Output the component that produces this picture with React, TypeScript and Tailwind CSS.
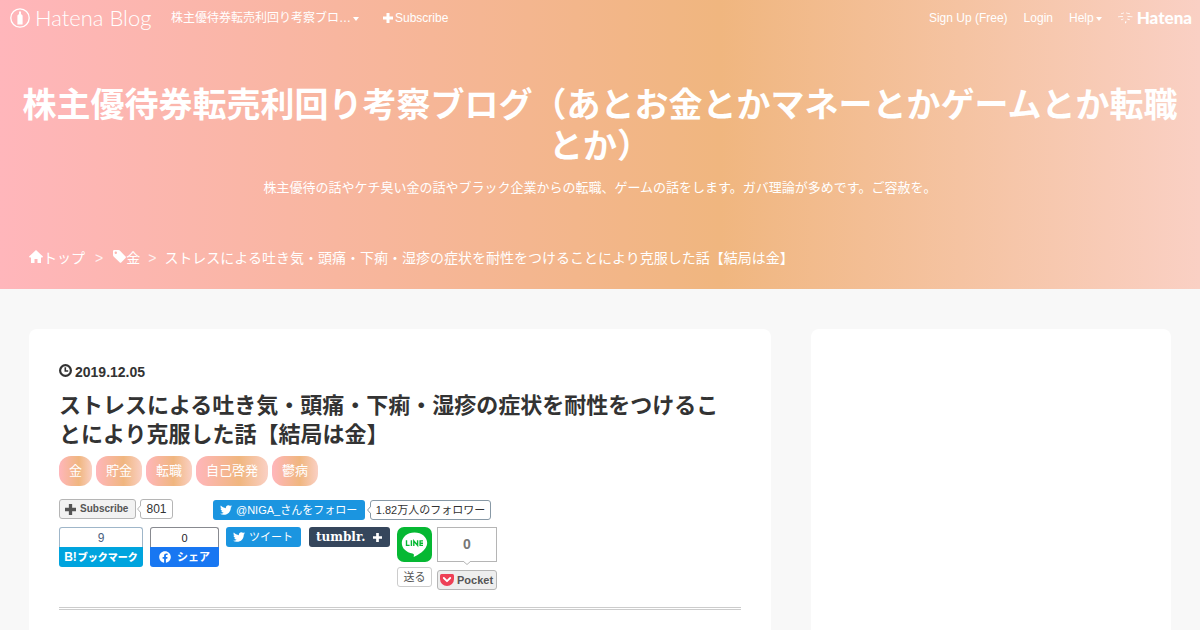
import React from "react"
import { FaTwitter, FaFacebook } from "react-icons/fa"

const headerGradient = "bg-[linear-gradient(90deg,#ffb6bb_0%,#f0b67f_60%,#fad0c4_100%)]"

const tags = ["金", "貯金", "転職", "自己啓発", "鬱病"]

const HomeIcon = () => (
    <svg viewBox="0 0 14 13" className="mb-1 h-[13px] w-[14px] fill-current" aria-hidden="true">
        <path d="M7 0 L14 6.6 L13.4 7.4 H12 V13 H8.5 V9 H5.5 V13 H2 V7.4 H.6 L0 6.6 Z" />
    </svg>
)

const TagIcon = () => (
    <svg viewBox="0 0 13 13" className="mb-1 h-[13px] w-[13px] fill-current" aria-hidden="true">
        <path fillRule="evenodd" d="M0 1.2 Q0 0 1.2 0 H5.4 Q6.2 0 6.8 .6 L12.6 6.6 Q13.2 7.3 12.6 8 L8.2 12.5 Q7.5 13.1 6.8 12.5 L.6 6.4 Q0 5.8 0 5 Z M2.8 1.6 A1.2 1.2 0 1 0 2.8 4 A1.2 1.2 0 1 0 2.8 1.6 Z" />
    </svg>
)

const ClockIcon = () => (
    <svg viewBox="0 0 13 13" className="mb-1 h-[13px] w-[13px]" fill="none" stroke="currentColor" strokeWidth="2.2" aria-hidden="true">
        <circle cx="6.5" cy="6.5" r="5.4" />
        <path d="M6.3 3.2 V7 H9.2" strokeWidth="1.6" />
    </svg>
)

const PlusIcon = ({ className }: { className: string }) => (
    <svg viewBox="0 0 10 10" className={className} fill="currentColor" aria-hidden="true">
        <path d="M3.5 0 H6.5 V3.5 H10 V6.5 H6.5 V10 H3.5 V6.5 H0 V3.5 H3.5 Z" />
    </svg>
)

const Caret = () => (
    <svg viewBox="0 0 6 4" className="mt-px h-1 w-[6px] fill-current" aria-hidden="true">
        <path d="M0 0 H6 L3 4 Z" />
    </svg>
)

// the little arrow on the left side of a counter
const BubbleArrow = ({ color }: { color: string }) => (
    <svg viewBox="0 0 4 8" className="absolute top-[5px] -left-[4px] h-2 w-1" aria-hidden="true">
        <path d="M4 0 L.6 4 L4 8" fill="#fff" stroke={color} />
    </svg>
)

const GlobalNav = () => (
    <nav className="flex h-9 items-center justify-between pr-2 pl-[10px] text-xs text-white">
        <div className="flex items-center">
            <a href="#" className="flex w-[141px] items-center gap-[5px] whitespace-nowrap" aria-label="Hatena Blog">
                <svg viewBox="0 0 20 20" className="h-5 w-5 shrink-0" aria-hidden="true">
                    <circle cx="10" cy="10" r="9.2" fill="none" stroke="#fff" strokeWidth="1.3" />
                    <path d="M9 3.5 H11 V6 L12.6 7.6 V16.5 H7.4 V7.6 L9 6 Z" fill="#fff" />
                </svg>
                <span className="font-[Lato] text-[22px] leading-6 font-light">Hatena Blog</span>
            </a>
            <a href="#" className="ml-5 flex items-center gap-[2px]">株主優待券転売利回り考察ブロ…<Caret /></a>
            <a href="#" className="ml-6 flex items-center gap-[2px]"><PlusIcon className="h-[10px] w-[10px]" />Subscribe</a>
        </div>
        <div className="flex items-center gap-4">
            <a href="#">Sign Up (Free)</a>
            <a href="#">Login</a>
            <a href="#" className="flex items-center gap-[2px]">Help<Caret /></a>
            <a href="#" className="flex items-center gap-1" aria-label="Hatena">
                <svg viewBox="0 0 15 12" className="h-3 w-[15px] fill-white" aria-hidden="true">
                    <path d="M3 1.5 L6 .5 V1.2 L3 2.2 Z M8 .5 L12 1.5 V2.2 L8 1.2 Z M0 4.6 L5 4 V4.7 L0 5.3 Z M9.5 4 L14.5 4.6 V5.3 L9.5 4.7 Z M3 7.6 L5.5 6.5 V7.3 L3 8.3 Z M9.5 6.5 L12 7.6 L11.4 8.2 L9 7.3 Z M7 9.4 H8.6 L8 11.2 H7 Z" />
                </svg>
                <span className="font-[Lato] text-[17px] leading-5 font-black">Hatena</span>
            </a>
        </div>
    </nav>
)

const ShareButtons = () => (
    <>
        <div className="mt-[13px] flex items-start text-xs leading-[18px] text-[#333]">
            <button className="flex h-5 w-[77px] items-center gap-1 rounded-[3px] border border-[#b5b5b5] bg-[#f2f2f2] pl-[5px] text-[10px] font-bold text-[#555]">
                <PlusIcon className="h-[11px] w-[11px]" />Subscribe
            </button>
            <a href="#" className="relative ml-1 h-5 w-[33px] rounded-[3px] border border-[#b5b5b5] text-center">
                <BubbleArrow color="#b5b5b5" />801
            </a>
            <a href="#" className="mt-px ml-10 flex h-5 w-[152px] items-center gap-1 rounded-[3px] bg-[#1b95e0] pl-[7px] text-[11px] text-white">
                <FaTwitter size={12} />@NIGA_さんをフォロー
            </a>
            <a href="#" className="relative mt-px ml-[5px] h-5 w-[121px] rounded-[3px] border border-[#8899a6] text-center text-[11px]">
                <BubbleArrow color="#8899a6" />1.82万人のフォロワー
            </a>
        </div>
        <div className="mt-[7px] flex items-start text-[11px]">
            <a href="#" className="w-[84px] text-center">
                <span className="block h-5 rounded-t-[3px] border border-b-0 border-[#9fb6c9] text-xs leading-5 text-[#4a6180]">9</span>
                <span className="flex h-5 items-center justify-center gap-px rounded-b-[3px] bg-[#00a4de] text-[10px] font-black text-white">
                    <b className="text-xs">B!</b>ブックマーク
                </span>
            </a>
            <a href="#" className="ml-[7px] w-[69px] text-center">
                <span className="block h-5 rounded-t-[3px] border border-b-0 border-[#888a90] leading-5 text-[#1d2129]">0</span>
                <span className="flex h-5 items-center justify-center gap-[6px] rounded-b-[3px] bg-[#1877f2] font-bold text-white">
                    <FaFacebook size={12} />シェア
                </span>
            </a>
            <a href="#" className="ml-[7px] flex h-5 w-[75px] items-center gap-1 rounded-[3px] bg-[#1b95e0] pl-[7px] text-white">
                <FaTwitter size={12} />ツイート
            </a>
            <a href="#" className="ml-2 flex h-5 w-[81px] items-center justify-between rounded-[3px] bg-[#35465c] pr-2 pl-[7px] text-white">
                <span className="font-['DejaVu_Serif'] text-xs leading-4 font-bold">tumblr.</span>
                <PlusIcon className="h-[9px] w-[9px]" />
            </a>
            <a href="#" className="ml-[7px] flex w-[35px] flex-col gap-[5px] text-center">
                <svg viewBox="0 0 35 35" className="h-[35px] w-[35px]" aria-hidden="true">
                    <rect width="35" height="35" rx="7" fill="#06b833" />
                    <path d="M17.5 5.5 C10.3 5.5 4.8 10.2 4.8 16 C4.8 21.3 9.3 25.5 15.5 26.4 C17.3 26.8 17 27.6 16.7 30 C20 28.7 30.2 23 30.2 16 C30.2 10.2 24.7 5.5 17.5 5.5 Z" fill="#fff" />
                    <path d="M9.5 13.2 V18.4 H12.6 M14.4 13.2 V19 M16.8 19 V14 L20.6 18.4 V13.2 M26 13.9 H23.1 V18.4 H26 M23.1 16.2 H26" fill="none" stroke="#06b833" strokeWidth="1.4" />
                </svg>
                <span className="block h-5 rounded-[3px] border border-[#ccc] leading-[18px] text-[#555]">送る</span>
            </a>
            <a href="#" className="ml-[5px] flex w-[60px] flex-col gap-2">
                <span className="relative block h-[35px] border border-[#b5b5b5] text-center text-sm leading-[33px] font-bold text-[#777]">
                    0
                    <svg viewBox="0 0 8 4" className="absolute top-[33px] left-[25px] h-1 w-2" aria-hidden="true">
                        <path d="M0 0 L4 3.5 L8 0" fill="#fff" stroke="#b5b5b5" />
                    </svg>
                </span>
                <span className="flex h-5 items-center gap-[3px] rounded-[3px] border border-[#b5b5b5] bg-[#eee] pl-[2px] font-bold text-[#555]">
                    <svg viewBox="0 0 14 12" className="h-3 w-[14px]" aria-hidden="true">
                        <path d="M1.5 0 H12.5 Q14 0 14 1.5 V5 A7 7 0 0 1 0 5 V1.5 Q0 0 1.5 0 Z" fill="#ee4056" />
                        <path d="M3.8 4 L7 7.2 L10.2 4" fill="none" stroke="#fff" strokeWidth="1.8" strokeLinecap="round" strokeLinejoin="round" />
                    </svg>
                    Pocket
                </span>
            </a>
        </div>
    </>
)

const App = () => {
    return (
        <div className="min-h-screen overflow-hidden bg-[#f8f8f8] font-['Liberation_Sans','Noto_Sans_CJK_JP',sans-serif] text-[#333]">
            <header className={`${headerGradient} pb-5 text-white`}>
                <GlobalNav />
                <div className="mt-[49px] px-4 text-center">
                    <h1 className="text-[34px] leading-[41px] font-bold">
                        <a href="#">株主優待券転売利回り考察ブログ（あとお金とかマネーとかゲームとか転職とか）</a>
                    </h1>
                    <p className="mt-[11px] text-[13px] leading-5">
                        株主優待の話やケチ臭い金の話やブラック企業からの転職、ゲームの話をします。ガバ理論が多めです。ご容赦を。
                    </p>
                </div>
                <div className="mt-[49px] flex items-center px-[29px] text-sm leading-[22px]">
                    <a href="#" className="flex items-center"><HomeIcon />トップ</a>
                    <span className="mx-[10px] opacity-80">&gt;</span>
                    <a href="#" className="flex items-center"><TagIcon />金</a>
                    <span className="mx-2 opacity-80">&gt;</span>
                    <span>ストレスによる吐き気・頭痛・下痢・湿疹の症状を耐性をつけることにより克服した話【結局は金】</span>
                </div>
            </header>

            <div className="mt-10 flex items-stretch gap-10 px-[29px]">
                <main className="min-w-0 flex-1 rounded-lg bg-white px-[30px] pt-8 pb-10">
                    <div className="flex items-center gap-[3px] text-sm leading-[22px] font-bold">
                        <ClockIcon />
                        <time dateTime="2019-12-05">2019.12.05</time>
                    </div>
                    <h2 className="mt-2 text-[22px] leading-[29px] font-bold">
                        ストレスによる吐き気・頭痛・下痢・湿疹の症状を耐性をつけるこ<br />
                        とにより克服した話【結局は金】
                    </h2>
                    <div className="mt-[7px] flex gap-1 text-[13px] leading-[30px] text-white">
                        {tags.map((tag) => (
                            <a key={tag} href="#" className={`${headerGradient} rounded-xl px-[10px]`}>{tag}</a>
                        ))}
                    </div>
                    <ShareButtons />
                    <hr className="mt-[17px] h-[3px] border-y border-[#ccc]" />
                </main>
                <aside className="w-[360px] rounded-lg bg-white" />
            </div>
        </div>
    )
}

export default App
